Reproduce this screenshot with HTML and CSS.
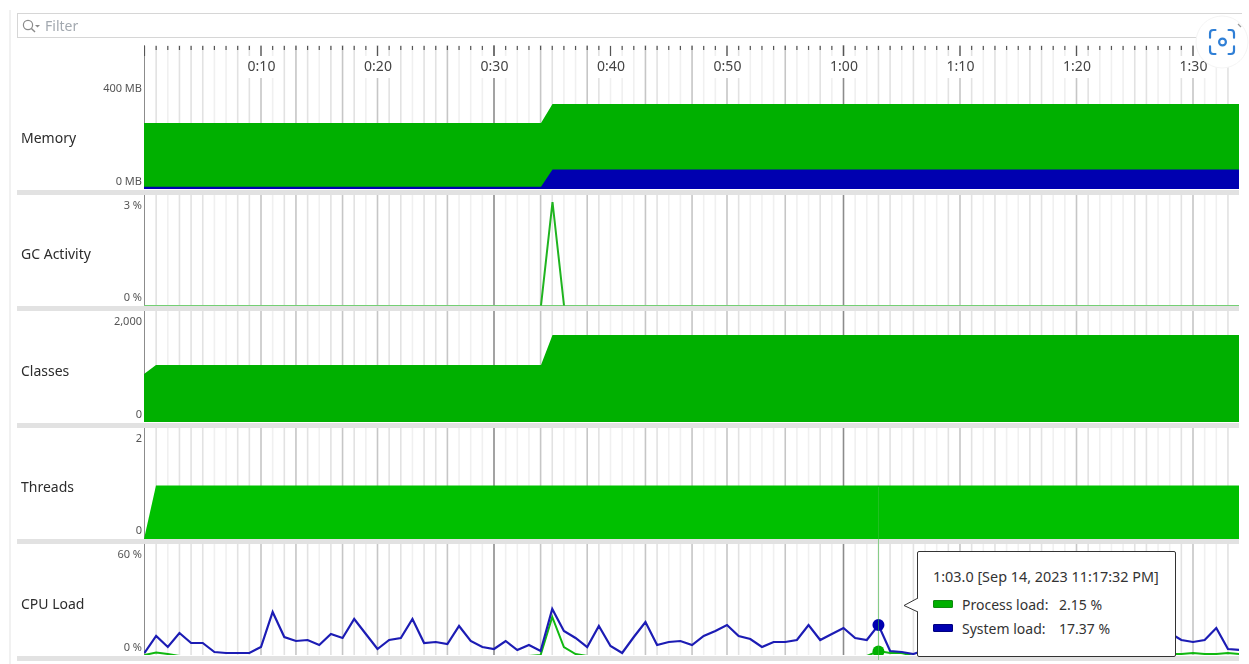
FILE: index.html
```html
<!DOCTYPE html>
<html lang="en">
  <head>
    <meta charset="UTF-8" />
    <meta name="viewport" content="width=device-width, initial-scale=1.0" />
    <title>Telemetry</title>
    <link rel="stylesheet" href="styles.css">
  </head>
  <body>
    <div class="page">
      <div class="filter">
        <svg class="filter-icon" width="22" height="16" viewBox="0 0 22 16">
          <circle cx="7" cy="7" r="4.6" fill="none" stroke="#8a8a8a" stroke-width="1.2" />
          <path d="M10.4 10.4 L14 14" stroke="#8a8a8a" stroke-width="1.4" />
          <path d="M14 7 H19 L16.5 9.5 Z" fill="#8a8a8a" />
        </svg>
        <span>Filter</span>
      </div>

      <div class="ruler">
        <svg class="ruler-lines" id="rulerLines" width="1095" height="33"></svg>
        <div class="ruler-labels">
          <div><span>0:10</span></div>
          <div><span>0:20</span></div>
          <div><span>0:30</span></div>
          <div><span>0:40</span></div>
          <div><span>0:50</span></div>
          <div><span>1:00</span></div>
          <div><span>1:10</span></div>
          <div><span>1:20</span></div>
          <div><span>1:30</span></div>
        </div>
      </div>

      <div class="charts">
        <div class="row">
          <div class="row-head">
            <div class="row-name">Memory</div>
            <div class="axis"><span>400 MB</span><span>0 MB</span></div>
          </div>
          <svg class="plot" width="1095" height="111">
            <polygon class="green-dark" points="0,45 397,45 408.5,26 1095,26 1095,111 0,111" />
            <polygon class="blue" points="0,108.7 397,108.7 408.5,91.5 1095,91.5 1095,111 0,111" />
          </svg>
        </div>
        <div class="row">
          <div class="row-head">
            <div class="row-name">GC Activity</div>
            <div class="axis"><span>3 %</span><span>0 %</span></div>
          </div>
          <svg class="plot" width="1095" height="111">
            <polyline class="gc-base" points="0,110.5 1095,110.5" />
            <polyline class="gc-spike" points="397,110.5 408.5,7 420,110.5" />
          </svg>
        </div>
        <div class="row">
          <div class="row-head">
            <div class="row-name">Classes</div>
            <div class="axis"><span>2,000</span><span>0</span></div>
          </div>
          <svg class="plot" width="1095" height="111">
            <polygon class="green-dark" points="0,63 12,54 397,54 408.5,24 1095,24 1095,111 0,111" />
          </svg>
        </div>
        <div class="row">
          <div class="row-head">
            <div class="row-name">Threads</div>
            <div class="axis"><span>2</span><span>0</span></div>
          </div>
          <svg class="plot" width="1095" height="111">
            <polygon class="green" points="0,111 12,57.5 1095,57.5 1095,111" />
          </svg>
        </div>
        <div class="row">
          <div class="row-head">
            <div class="row-name">CPU Load</div>
            <div class="axis"><span>60 %</span><span>0 %</span></div>
          </div>
          <svg class="plot" id="cpuPlot" width="1095" height="111"></svg>
        </div>

        <div class="cursor"></div>

        <div class="tooltip">
          <svg class="tooltip-arrow" width="16" height="18" viewBox="0 0 16 18">
            <polygon points="15,2 1,9.5 15,16" fill="#fff" />
            <polyline points="15,2 1,9.5 15,16" fill="none" stroke="#333" stroke-width="1" />
          </svg>
          <div class="tooltip-title">1:03.0 [Sep 14, 2023 11:17:32 PM]</div>
          <div class="legend">
            <i class="swatch swatch-green"></i><span>Process load:</span><span>2.15 %</span>
            <i class="swatch swatch-blue"></i><span>System load:</span><span>17.37 %</span>
          </div>
        </div>
      </div>

      <svg class="scan-badge" width="60" height="60" viewBox="0 0 60 60">
        <circle cx="28" cy="28" r="26" fill="#fff" stroke="#f4f4f4" stroke-width="1" />
        <path d="M22 17 H20 Q17 17 17 20 V24 M34 17 H36 Q39 17 39 20 V24 M17 32 V36 Q17 39 20 39 H22 M39 32 V36 Q39 39 36 39 H34" transform="translate(-2.5 -2.5) scale(1.09)" fill="none" stroke="#2f7fd6" stroke-width="2" stroke-linecap="round" />
        <circle cx="28.5" cy="28" r="3.4" fill="none" stroke="#2f7fd6" stroke-width="2.2" />
        <path d="M44 10 L47 13" stroke="#999" stroke-width="1.2" />
      </svg>
    </div>
    <script src="chart.js"></script>
  </body>
</html>
```

FILE: styles.css
```css
* {
  box-sizing: border-box;
}
body {
  margin: 0;
  background-color: #ffffff;
  font-family: "Noto Sans", "Open Sans", sans-serif;
  color: #333;
  overflow: hidden;
}
.page {
  position: relative;
  height: 664px;
  padding: 13px 10px 0 17px;
  filter: blur(0.4px);
}
.page::before {
  content: "";
  position: absolute;
  left: 9px;
  top: 10px;
  bottom: 0;
  width: 2px;
  background-color: #f1f1f1;
}
.filter {
  display: flex;
  align-items: center;
  gap: 2px;
  width: 1225px;
  height: 25px;
  padding-left: 3px;
  border: 1px solid #d6d6d6;
  border-right: 0;
  font-size: 14px;
  color: #a3a9b0;
}
.ruler {
  position: relative;
  height: 33px;
  margin-top: 7px;
  margin-left: 127px;
}
.ruler-lines {
  position: absolute;
  top: 0;
  left: 0;
}
.ruler-labels {
  position: relative;
  display: flex;
  padding-top: 11px;
  padding-left: 59.25px;
}
.ruler-labels div {
  flex: none;
  width: 116.5px;
  height: 22px;
  text-align: center;
  font-size: 14px;
  line-height: 20px;
  color: #444;
}
.ruler-labels span {
  display: inline-block;
  height: 22px;
  padding: 0 2px;
  background-color: #ffffff;
}
.charts {
  position: relative;
}
.row {
  display: flex;
  height: 116.5px;
  border-bottom: 5.5px solid #e2e2e2;
}
.row-head {
  display: flex;
  justify-content: space-between;
  width: 127px;
  padding-left: 4px;
  padding-right: 2px;
}
.row-name {
  align-self: center;
  margin-top: 7px;
  font-size: 14px;
  color: #2c2c2c;
}
.axis {
  display: flex;
  flex-direction: column;
  justify-content: space-between;
  padding: 2px 0 2px;
  text-align: right;
  font-size: 11px;
  color: #555;
}
.plot {
  display: block;
  flex: none;
}
.green-dark {
  fill: #00b000;
}
.green {
  fill: #00c000;
}
.blue {
  fill: #0000b0;
}
.gc-base {
  fill: none;
  stroke: #74cf74;
  stroke-width: 1;
}
.gc-spike {
  fill: none;
  stroke: #1fb41f;
  stroke-width: 2;
}
.line-green {
  fill: none;
  stroke: #10b810;
  stroke-width: 2;
}
.line-blue {
  fill: none;
  stroke: #1c1cb4;
  stroke-width: 2.2;
}
.cursor {
  position: absolute;
  left: 861px;
  top: 409px;
  width: 1px;
  height: 173px;
  background-color: rgba(60, 190, 60, 0.55);
}
.tooltip {
  position: absolute;
  left: 900px;
  top: 473px;
  width: 259px;
  height: 106px;
  padding: 15px 15px;
  background-color: #ffffff;
  border: 1px solid #333;
  border-radius: 2px;
  font-size: 14px;
  color: #333;
}
.tooltip-arrow {
  position: absolute;
  left: -15px;
  top: 44px;
}
.tooltip-title {
  font-size: 14.4px;
  white-space: nowrap;
}
.legend {
  display: grid;
  grid-template-columns: 29px 97px auto;
  grid-auto-rows: 24px;
  align-items: center;
  margin-top: 6px;
}
.swatch {
  display: block;
  width: 20px;
  height: 8px;
  border-radius: 1px;
}
.swatch-green {
  background-color: #00b000;
  border: 1px solid #108a10;
}
.swatch-blue {
  background-color: #0000b0;
  border: 1px solid #000080;
}
.scan-badge {
  position: absolute;
  left: 1194px;
  top: 14px;
}
```

FILE: chart.js
```js
const SVG_NS = "http://www.w3.org/2000/svg";
const STEP = 11.65;
// one digit per second: how dark the grid line comes out
const GRID =
  "3101110011" + "2012101210" + "2110112000" + "3000210021" + "0002100200" +
  "2100020010" + "3001101001" + "2101001100" + "2100011001" + "2001";
const SHADES = ["#f0f0f0", "#e2e2e2", "#c6c6c6", "#8c8c8c"];

// screen y of the samples, one per second from 0:00
const SYSTEM_LOAD = [
  653, 636, 647, 633, 643, 643, 652, 653, 653, 653,
  647, 612, 637, 641, 640, 645, 634, 638, 619, 634,
  649, 640, 638, 619, 643, 642, 644, 626, 641, 647,
  649, 641, 650, 645, 651, 609, 631, 638, 647, 626,
  646, 653, 637, 622, 645, 642, 641, 645, 636, 631,
  625, 636, 639, 647, 642, 642, 640, 625, 640, 634,
  628, 638, 640, 625, 651, 652, 654, 650, 648, 646,
  646, 646, 646, 646, 646, 646, 646, 646, 646, 646,
  646, 646, 646, 646, 646, 646, 640, 634, 633, 640,
  642, 640, 628, 649, 650,
];
const PROCESS_LOAD = SYSTEM_LOAD.map((_, s) => (s >= 88 ? 654 - (s % 3 === 0 ? 1 : 0) : 656));
PROCESS_LOAD[0] = 655;
PROCESS_LOAD[1] = 652.5;
PROCESS_LOAD[2] = 654;
PROCESS_LOAD[3] = 656;
PROCESS_LOAD[34] = 655;
PROCESS_LOAD[35] = 617;
PROCESS_LOAD[36] = 647;
PROCESS_LOAD[37] = 654;
PROCESS_LOAD[63] = 651;
PROCESS_LOAD[64] = 653;
PROCESS_LOAD[65] = 653;

const CPU_TOP = 544;

function add(parent, tag, attrs, before) {
  let el = document.createElementNS(SVG_NS, tag);
  for (let key in attrs) {
    el.setAttribute(key, attrs[key]);
  }
  parent.insertBefore(el, before || null);
  return el;
}

function gridX(second) {
  return 0.5 + second * STEP;
}

function drawGrid(svg, height) {
  let first = svg.firstChild;
  for (let s = 0; s < GRID.length; s++) {
    let x = gridX(s);
    add(svg, "line", {
      x1: x, x2: x, y1: 0, y2: height,
      stroke: SHADES[GRID[s]],
      "stroke-width": s === 0 ? 1 : 1.6,
    }, first);
  }
}

function points(values) {
  return values.map((y, s) => gridX(s) + "," + (y - CPU_TOP)).join(" ");
}

document.querySelectorAll(".plot").forEach((svg) => drawGrid(svg, 111));

let ruler = document.getElementById("rulerLines");
drawGrid(ruler, 33);
for (let s = 0; s < GRID.length; s++) {
  add(ruler, "line", {
    x1: gridX(s), x2: gridX(s), y1: 1,
    y2: s % 10 === 0 ? 11 : 5,
    stroke: "#555",
    "stroke-width": 1.2,
  });
}

let cpu = document.getElementById("cpuPlot");
add(cpu, "polyline", { class: "line-green", points: points(PROCESS_LOAD) });
add(cpu, "polyline", { class: "line-blue", points: points(SYSTEM_LOAD) });
add(cpu, "circle", { cx: gridX(63), cy: 651.5 - CPU_TOP, r: 6, fill: "#00b000" });
add(cpu, "circle", { cx: gridX(63), cy: 625 - CPU_TOP, r: 6, fill: "#0000b0" });
```
